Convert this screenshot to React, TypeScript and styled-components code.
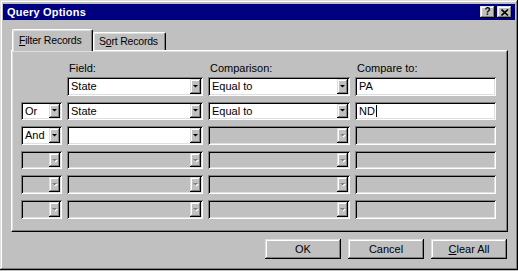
import React from "react";
import styled, { createGlobalStyle, css } from "styled-components";

const GlobalStyle = createGlobalStyle`
  html, body { margin: 0; padding: 0; background: #c0c0c0; }
  body { font-family: "Liberation Sans", Arial, sans-serif; font-size: 11px; }
  * { box-sizing: border-box; }
`;

const raised = css`
  box-shadow: inset -1px -1px #000, inset 1px 1px #dfdfdf, inset -2px -2px #808080, inset 2px 2px #fff;
`;

const sunken = css`
  box-shadow: inset 1px 1px #808080, inset -1px -1px #fff, inset 2px 2px #000, inset -2px -2px #dfdfdf;
`;

const Window = styled.div`
  width: 518px;
  height: 270px;
  background: #c0c0c0;
  padding: 3px;
  display: flex;
  flex-direction: column;
  ${raised}
`;

const TitleBar = styled.div`
  height: 16px;
  margin-top: 1px;
  background: #000080;
  display: flex;
  align-items: center;
  justify-content: space-between;
  padding: 0 3px 0 4px;
`;

const Title = styled.span`
  color: #fff;
  font-weight: bold;
  font-size: 11px;
  letter-spacing: 0.2px;
`;

const CaptionButtons = styled.div`
  display: flex;
  gap: 2px;
`;

const CaptionButton = styled.div`
  width: 15px;
  height: 12px;
  background: #c0c0c0;
  display: flex;
  align-items: center;
  justify-content: center;
  font-weight: bold;
  font-size: 10px;
  line-height: 1;
  color: #000;
  ${raised}
`;

const Body = styled.div`
  padding: 9px 7px 0 8px;
  display: flex;
  flex-direction: column;
`;

const TabStrip = styled.div`
  display: flex;
  align-items: flex-end;
  height: 21px;
  padding-left: 1px;
  position: relative;
  z-index: 1;
`;

const Tab = styled.div<{ $active?: boolean }>`
  background: #c0c0c0;
  height: ${(p) => (p.$active ? "22px" : "18px")};
  margin-bottom: ${(p) => (p.$active ? "-1px" : "0")};
  width: ${(p) => (p.$active ? "81px" : "73px")};
  border-top: 1px solid #fff;
  border-left: 1px solid #fff;
  border-right: 1px solid #000;
  border-radius: 2px 2px 0 0;
  box-shadow: inset -1px 0 #808080, inset 1px 1px #dfdfdf;
  padding: ${(p) => (p.$active ? "4px 0 0 6px" : "2px 0 0 5px")};
  font-size: 10.5px;
  letter-spacing: -0.2px;
  color: #000;
  white-space: nowrap;
  overflow: hidden;
`;

const U = styled.span`
  text-decoration: underline;
`;

const Panel = styled.div`
  width: 497px;
  height: 182px;
  background: #c0c0c0;
  padding: 11px 0 0 9px;
  border-top: 1px solid #fff;
  border-left: 1px solid #fff;
  border-right: 1px solid #000;
  border-bottom: 1px solid #000;
  box-shadow: inset -1px -1px #808080, inset 1px 1px #dfdfdf;
`;

const Grid = styled.div`
  display: grid;
  grid-template-columns: 41px 136px 142px 141px;
  column-gap: 5px;
`;

const Header = styled(Grid)`
  height: 15px;
`;

const Rows = styled(Grid)`
  grid-auto-rows: 18.6px;
  row-gap: 6px;
`;

const Label = styled.div`
  font-size: 11px;
  line-height: 13px;
  color: #000;
  padding-left: 2px;
`;

const Well = styled.div<{ $disabled?: boolean }>`
  position: relative;
  height: 100%;
  background: ${(p) => (p.$disabled ? "#c0c0c0" : "#fff")};
  display: flex;
  align-items: center;
  padding-left: 4px;
  font-size: 11px;
  color: #000;
  ${sunken}
`;

const DropButton = styled.div`
  position: absolute;
  top: 2px;
  right: 2px;
  bottom: 2px;
  width: 11px;
  background: #c0c0c0;
  display: flex;
  align-items: center;
  justify-content: center;
  ${raised}
`;

const Caret = styled.span`
  display: inline-block;
  width: 1px;
  height: 12px;
  background: #000;
  margin-left: 1px;
`;

const Footer = styled.div`
  display: flex;
  justify-content: flex-end;
  gap: 7px;
  margin-top: 7px;
  padding-right: 1px;
`;

const Button = styled.div`
  width: 76px;
  height: 20px;
  background: #c0c0c0;
  display: flex;
  align-items: center;
  justify-content: center;
  font-size: 11px;
  color: #000;
  ${raised}
`;

const Arrow: React.FC<{ disabled?: boolean }> = ({ disabled }) => (
  <svg width="7" height="5" viewBox="0 0 7 5">
    {disabled && <polygon points="2,2 7,2 4.5,4.5" fill="#fff" />}
    <polygon points="1,1 6,1 3.5,3.5" fill={disabled ? "#808080" : "#000"} />
  </svg>
);

const Combo: React.FC<{ value?: string; disabled?: boolean }> = ({ value, disabled }) => (
  <Well $disabled={disabled}>
    {value}
    <DropButton>
      <Arrow disabled={disabled} />
    </DropButton>
  </Well>
);

type Cell = { value?: string; disabled?: boolean; caret?: boolean };
type Row = { conj: Cell | null; field: Cell; comp: Cell; to: Cell };

const rows: Row[] = [
  { conj: null, field: { value: "State" }, comp: { value: "Equal to" }, to: { value: "PA" } },
  { conj: { value: "Or" }, field: { value: "State" }, comp: { value: "Equal to" }, to: { value: "ND", caret: true } },
  { conj: { value: "And" }, field: { value: "" }, comp: { disabled: true }, to: { disabled: true } },
  { conj: { disabled: true }, field: { disabled: true }, comp: { disabled: true }, to: { disabled: true } },
  { conj: { disabled: true }, field: { disabled: true }, comp: { disabled: true }, to: { disabled: true } },
  { conj: { disabled: true }, field: { disabled: true }, comp: { disabled: true }, to: { disabled: true } },
];

export default function App() {
  return (
    <>
      <GlobalStyle />
      <Window>
        <TitleBar>
          <Title>Query Options</Title>
          <CaptionButtons>
            <CaptionButton>?</CaptionButton>
            <CaptionButton>
              <svg width="8" height="7" viewBox="0 0 8 7">
                <path d="M0.5 0.5 L7 6.5 M7 0.5 L0.5 6.5" stroke="#000" strokeWidth="1.6" />
              </svg>
            </CaptionButton>
          </CaptionButtons>
        </TitleBar>
        <Body>
          <TabStrip>
            <Tab $active>
              <U>F</U>ilter Records
            </Tab>
            <Tab>
              S<U>o</U>rt Records
            </Tab>
          </TabStrip>
          <Panel>
            <Header>
              <div />
              <Label>Field:</Label>
              <Label>Comparison:</Label>
              <Label>Compare to:</Label>
            </Header>
            <Rows>
              {rows.map((r, i) => (
                <React.Fragment key={i}>
                  {r.conj ? <Combo value={r.conj.value} disabled={r.conj.disabled} /> : <div />}
                  <Combo value={r.field.value} disabled={r.field.disabled} />
                  <Combo value={r.comp.value} disabled={r.comp.disabled} />
                  <Well $disabled={r.to.disabled}>
                    {r.to.value}
                    {r.to.caret && <Caret />}
                  </Well>
                </React.Fragment>
              ))}
            </Rows>
          </Panel>
          <Footer>
            <Button>OK</Button>
            <Button>Cancel</Button>
            <Button>
              <U>C</U>lear All
            </Button>
          </Footer>
        </Body>
      </Window>
    </>
  );
}
